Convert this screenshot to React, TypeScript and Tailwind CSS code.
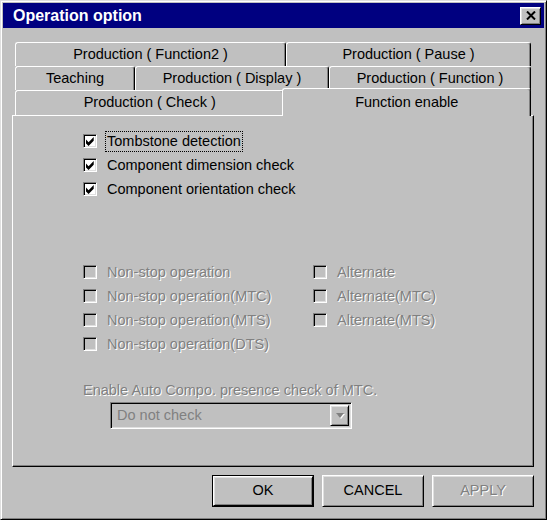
import React from 'react';

const raised =
  'border border-t-white border-l-white border-b-black border-r-black shadow-[inset_1px_1px_0_#dfdfdf,inset_-1px_-1px_0_#808080] bg-[#c0c0c0]';
const sunken =
  'border border-t-[#808080] border-l-[#808080] border-b-white border-r-white shadow-[inset_1px_1px_0_#000,inset_-1px_-1px_0_#dfdfdf]';
const disabledText = 'text-[#808080] [text-shadow:1px_1px_0_#fff]';

function Tab({ label, width, selected }: { label: string; width: string; selected?: boolean }) {
  return (
    <div
      className={`${width} flex items-center justify-center border-t border-l border-r border-t-white border-l-white border-r-black shadow-[inset_-1px_0_0_#808080] rounded-t-[3px] bg-[#c0c0c0] ${
        selected ? '-ml-[2px] -mt-[2px] h-[28px] relative z-10' : 'h-full'
      }`}
    >
      {label}
    </div>
  );
}

function CheckBox({ label, checked, disabled, focused }: { label: string; checked?: boolean; disabled?: boolean; focused?: boolean }) {
  return (
    <div className="flex items-center h-[24px]">
      <span className={`w-[14px] h-[14px] flex items-center justify-center ${sunken} ${disabled ? 'bg-[#c0c0c0]' : 'bg-white'}`}>
        {checked && (
          <svg width="9" height="9" viewBox="0 0 7 7">
            <path d="M0 2 L2 4 L6 0 L6 3 L2 7 L0 5 Z" fill="#000" />
          </svg>
        )}
      </span>
      <span
        className={`ml-[9px] px-[1px] leading-[19px] ${focused ? 'outline-1 outline-dotted outline-black outline-offset-[0px]' : ''} ${
          disabled ? disabledText : 'text-black'
        }`}
      >
        {label}
      </span>
    </div>
  );
}

function Button({ label, isDefault, disabled }: { label: string; isDefault?: boolean; disabled?: boolean }) {
  return (
    <div className={`w-[102px] h-[32px] ${isDefault ? 'border border-black' : ''}`}>
      <div className={`w-full h-full flex items-center justify-center ${raised} ${disabled ? disabledText : 'text-black'}`}>
        {label}
      </div>
    </div>
  );
}

export default function App() {
  return (
    <div className="w-[547px] h-[520px] bg-[#c0c0c0] font-['Liberation_Sans',Arial,sans-serif] text-[14.5px] text-black">
      <div className="w-full h-full p-[2px] border border-t-[#dfdfdf] border-l-[#dfdfdf] border-b-black border-r-black shadow-[inset_1px_1px_0_#fff,inset_-1px_-1px_0_#808080]">
        {/* title bar */}
        <div className="h-[25px] bg-[#000080] flex items-center justify-between pl-[10px] pr-[3px]">
          <span className="text-white font-bold text-[16px]">Operation option</span>
          <div className={`w-[21px] h-[18px] flex items-center justify-center ${raised}`}>
            <svg width="10" height="9" viewBox="0 0 10 9">
              <path d="M1 0.5 L9 8.5 M9 0.5 L1 8.5" stroke="#000" strokeWidth="2" />
            </svg>
          </div>
        </div>

        {/* tabs */}
        <div className="mt-[14px] ml-[12px] w-[516px]">
          <div className="flex h-[24px]">
            <Tab label="Production ( Function2 )" width="w-[271px]" />
            <Tab label="Production ( Pause )" width="w-[245px]" />
          </div>
          <div className="flex h-[24px]">
            <Tab label="Teaching" width="w-[120px]" />
            <Tab label="Production ( Display )" width="w-[194px]" />
            <Tab label="Production ( Function )" width="w-[202px]" />
          </div>
          <div className="flex h-[25px]">
            <Tab label="Production ( Check )" width="w-[271px]" />
            <Tab label="Function enable" width="w-[250px]" selected />
          </div>
        </div>

        {/* panel */}
        <div className="ml-[9px] w-[522px] h-[352px] border border-t-white border-l-white border-b-black border-r-black shadow-[inset_-1px_-1px_0_#808080] pt-[13px] pl-[70px]">
          <CheckBox label="Tombstone detection" checked focused />
          <CheckBox label="Component dimension check" checked />
          <CheckBox label="Component orientation check" checked />

          <div className="mt-[59px] grid grid-cols-[230px_1fr]">
            <CheckBox label="Non-stop operation" disabled />
            <CheckBox label="Alternate" disabled />
            <CheckBox label="Non-stop operation(MTC)" disabled />
            <CheckBox label="Alternate(MTC)" disabled />
            <CheckBox label="Non-stop operation(MTS)" disabled />
            <CheckBox label="Alternate(MTS)" disabled />
            <CheckBox label="Non-stop operation(DTS)" disabled />
          </div>

          <div className={`mt-[24px] h-[20px] leading-[20px] ${disabledText}`}>Enable Auto Compo. presence check of MTC.</div>
          <div className={`mt-[2px] ml-[27px] w-[242px] h-[27px] flex items-stretch ${sunken} p-[2px]`}>
            <div className="flex-1 flex items-center pl-[4px] text-[#808080]">Do not check</div>
            <div className={`w-[19px] flex items-center justify-center ${raised}`}>
              <svg width="10" height="6" viewBox="0 0 10 6">
                <path d="M2 1 L10 1 L6 6 Z" fill="#fff" />
                <path d="M1 0 L9 0 L5 5 Z" fill="#808080" />
              </svg>
            </div>
          </div>
        </div>

        {/* buttons */}
        <div className="ml-[9px] w-[522px] mt-[8px] flex justify-end gap-[8px]">
          <Button label="OK" isDefault />
          <Button label="CANCEL" />
          <Button label="APPLY" disabled />
        </div>
      </div>
    </div>
  );
}
